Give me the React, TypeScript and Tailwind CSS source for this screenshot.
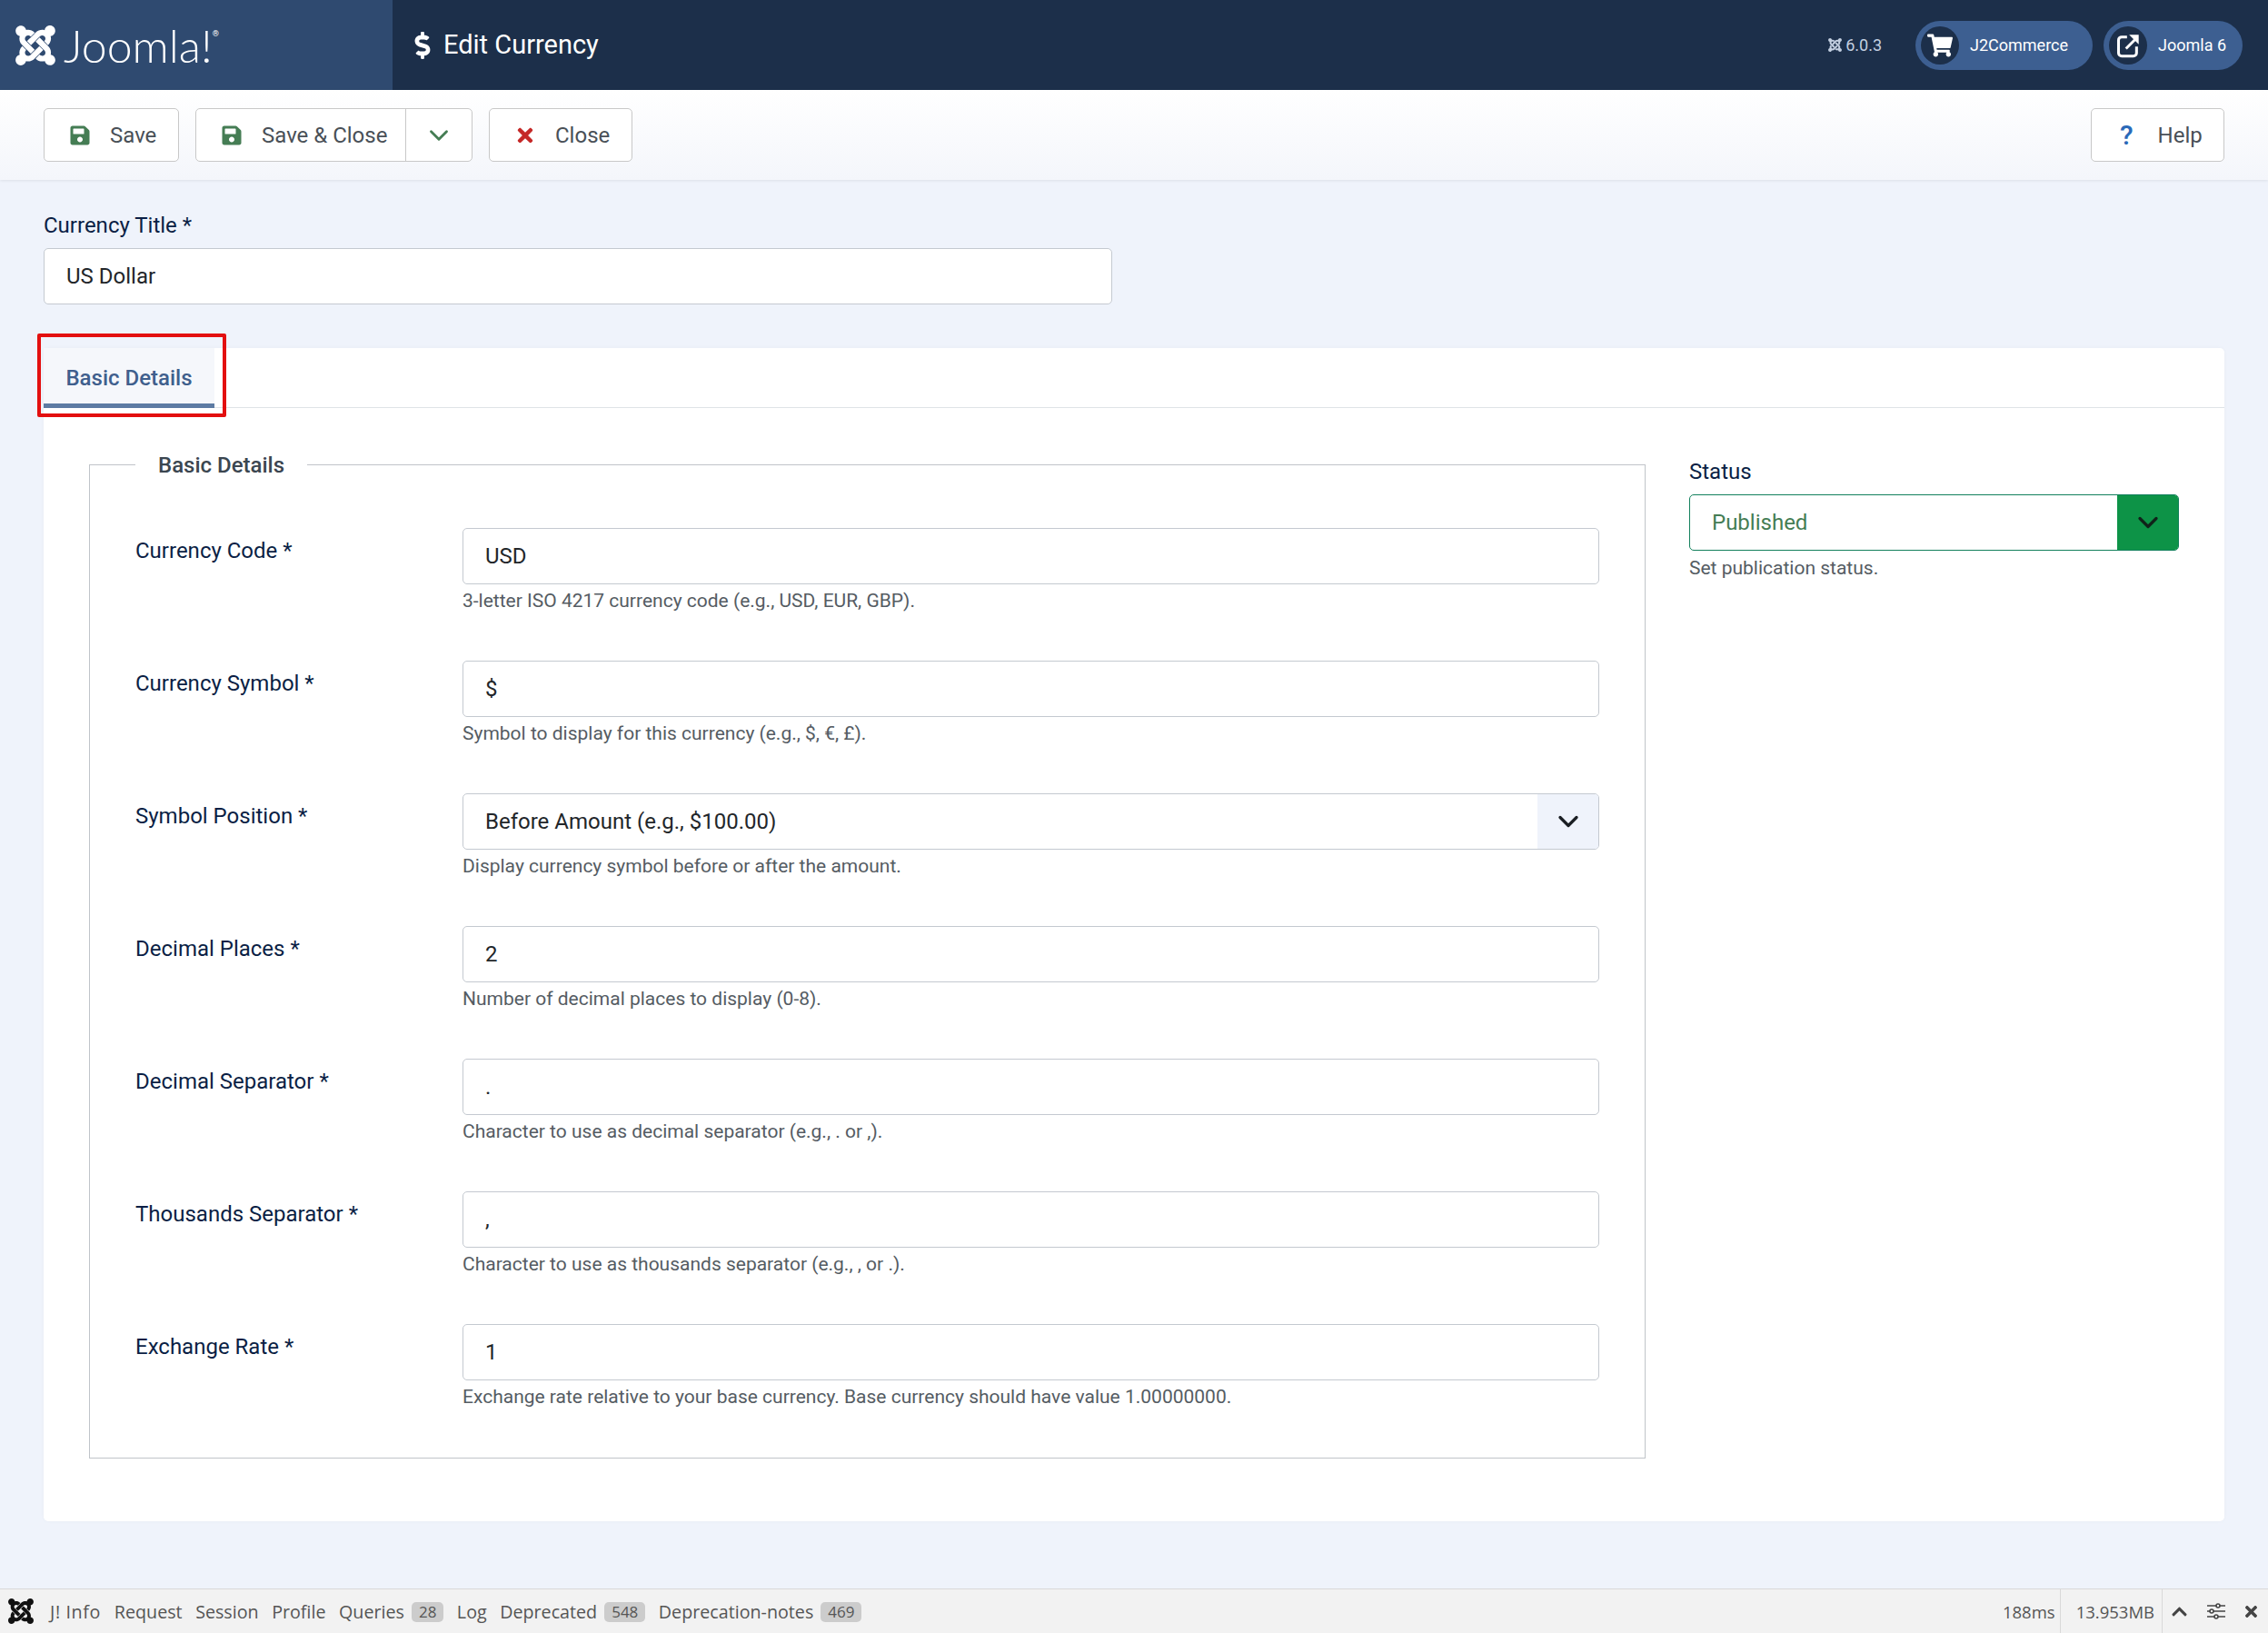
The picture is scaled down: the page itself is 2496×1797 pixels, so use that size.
import { ChevronDown } from 'lucide-react';
import {
  FaChevronUp,
  FaDollarSign,
  FaJoomla,
  FaSave,
  FaShoppingCart,
  FaTimes,
} from 'react-icons/fa';

const rows = [
  { label: 'Currency Code *', value: 'USD', help: '3-letter ISO 4217 currency code (e.g., USD, EUR, GBP).' },
  { label: 'Currency Symbol *', value: '$', help: 'Symbol to display for this currency (e.g., $, €, £).' },
  { label: 'Symbol Position *', value: 'Before Amount (e.g., $100.00)', help: 'Display currency symbol before or after the amount.', select: true },
  { label: 'Decimal Places *', value: '2', help: 'Number of decimal places to display (0-8).' },
  { label: 'Decimal Separator *', value: '.', help: 'Character to use as decimal separator (e.g., . or ,).' },
  { label: 'Thousands Separator *', value: ',', help: 'Character to use as thousands separator (e.g., , or .).' },
  { label: 'Exchange Rate *', value: '1', help: 'Exchange rate relative to your base currency. Base currency should have value 1.00000000.' },
];

const debugItems = [
  { label: 'Request' },
  { label: 'Session' },
  { label: 'Profile' },
  { label: 'Queries', count: '28' },
  { label: 'Log' },
  { label: 'Deprecated', count: '548' },
  { label: 'Deprecation-notes', count: '469' },
];

export default function App() {
  return (
    <div className="flex h-[1797px] flex-col overflow-hidden bg-[#eff3fb] font-['Roboto',sans-serif] text-[24px] text-[#22262a]">
      <header className="flex h-[99px] shrink-0 items-center bg-[#1c2f4a] text-white">
        <div className="flex h-full w-[432px] items-center bg-[#2f4a70] pl-[14px]">
          <FaJoomla className="text-[50px]" />
          <span className="ml-[6px] font-['Lato',sans-serif] text-[50px] font-light leading-none">Joomla!</span>
          <span className="mb-[24px] text-[9px]">®</span>
        </div>
        <div className="ml-[18px] flex items-center gap-[8px] text-[29px]">
          <FaDollarSign className="text-[30px]" />
          <span>Edit Currency</span>
        </div>
        <div className="ml-auto flex items-center pr-[28px]">
          <FaJoomla className="text-[17px] text-[#c3cfe0]" />
          <span className="ml-[3px] mr-[37px] text-[18px] text-[#c3cfe0]">6.0.3</span>
          <Pill label="J2Commerce" width="w-[195px]" icon={<FaShoppingCart className="text-[28px]" />} />
          <Pill label="Joomla 6" width="ml-[12px] w-[153px]" icon={<ExternalIcon />} />
        </div>
      </header>

      <div className="flex h-[99px] shrink-0 items-start bg-gradient-to-b from-white to-[#f4f6fb] px-[48px] pt-[20px] text-[#495057] shadow-[0_1px_3px_rgba(0,0,0,0.08)]">
        <ToolbarButton label="Save" icon={<FaSave className="text-[24px] text-[#457d54]" />} className="w-[149px]" />
        <div className="ml-[18px] flex h-[59px] w-[305px] items-center rounded-[5px] border border-[#c8c8c8] bg-white">
          <div className="flex flex-1 items-center pl-[27px]">
            <FaSave className="text-[24px] text-[#457d54]" />
            <span className="ml-[21px]">Save &amp; Close</span>
          </div>
          <div className="flex h-full w-[73px] items-center justify-center border-l border-[#c8c8c8]">
            <ChevronDown className="h-[34px] w-[34px] text-[#457d54]" strokeWidth={2} />
          </div>
        </div>
        <ToolbarButton label="Close" icon={<FaTimes className="text-[24px] text-[#c52827]" />} className="ml-[18px] w-[158px]" />
        <div className="ml-auto flex h-[59px] w-[147px] items-center gap-[27px] rounded-[5px] border border-[#c8c8c8] bg-white pl-[31px]">
          <span className="text-[30px] font-medium leading-none text-[#2a69b8]">?</span>
          <span>Help</span>
        </div>
      </div>

      <main className="flex-1 px-[48px] pt-[35px]">
        <label className="block leading-[30px] text-[#0b1f45]">Currency Title *</label>
        <div className="mt-[10px] flex h-[62px] w-[1176px] items-center rounded-[5px] border border-[#c4c9d0] bg-white pl-[24px]">US Dollar</div>

        <section className="mt-[48px] rounded-[5px] bg-white pb-[69px] shadow-[0_0_4px_rgba(0,0,0,0.03)]">
          <div className="flex h-[66px] border-b border-[#dfe3e7]">
            <div className="relative flex h-[66px] w-[188px] items-center justify-center border-b-[5px] border-[#5d7ba3] bg-[#f5f7fb] pt-[5px] font-medium text-[#3f5f8d]">
              Basic Details
              <span className="absolute bottom-[-15px] left-[-7px] right-[-13px] top-[-16px] rounded-[2px] border-[4px] border-[#e30f0f]" />
            </div>
          </div>

          <div className="flex gap-[48px] px-[50px]">
            <fieldset className="mt-[44px] h-[1112px] w-[1713px] shrink-0 border border-[#c0c4c9] pl-[50px] pr-[50px]">
              <legend className="px-[25px] pt-[2px] font-medium leading-[34px] text-[#3b4650]">Basic Details</legend>
              <div className="mt-[52px]">
                {rows.map((row) => (
                  <FormRow key={row.label} {...row} />
                ))}
              </div>
            </fieldset>

            <div className="w-[539px] pt-[55px]">
              <label className="block leading-[30px] text-[#0b1f45]">Status</label>
              <div className="mt-[10px] flex h-[62px] overflow-hidden rounded-[5px] border border-[#12805c] bg-white">
                <div className="flex flex-1 items-center pl-[24px] text-[#457d54]">Published</div>
                <div className="flex w-[67px] items-center justify-center bg-[#0d9347]">
                  <ChevronDown className="h-[36px] w-[36px] text-[#10231a]" strokeWidth={2.2} />
                </div>
              </div>
              <p className="mt-[5px] text-[21px] leading-[28px] text-[#555c63]">Set publication status.</p>
            </div>
          </div>
        </section>
      </main>

      <footer className="flex h-[49px] shrink-0 items-center border-t border-[#d9d9d9] bg-[#f2f2f2] font-['Open_Sans',sans-serif] text-[19.7px] text-[#555]">
        <FaJoomla className="ml-[7px] text-[32px] text-[#111]" />
        <span className="ml-[16px] mr-[15px] pt-[2px] tracking-[0.6px]">J! Info</span>
        {debugItems.map((item) => (
          <span key={item.label} className="mr-[14.5px] flex items-center pt-[2px]">
            {item.label}
            {item.count && (
              <span className="ml-[8px] rounded-[5px] bg-[#cccccc] px-[8px] text-[17px] leading-[22px] text-[#555]">{item.count}</span>
            )}
          </span>
        ))}
        <span className="ml-auto flex h-full items-center border-r border-[#d9d9d9] pr-[5px] pt-[2px] text-[18.5px]">188ms</span>
        <span className="flex h-full items-center border-r border-[#d9d9d9] pl-[17px] pr-[8px] pt-[2px] text-[18.5px]">13.953MB</span>
        <span className="flex items-center">
          <FaChevronUp className="ml-[9px] text-[19px] text-[#444]" />
          <SlidersIcon />
          <FaTimes className="ml-[19px] mr-[9px] text-[19px] text-[#444]" />
        </span>
      </footer>
    </div>
  );
}

function ExternalIcon() {
  return (
    <svg viewBox="0 0 24 24" className="h-[28px] w-[28px]" fill="none" stroke="currentColor" strokeWidth={2.6}>
      <path d="M11 4H6a3 3 0 0 0-3 3v12a3 3 0 0 0 3 3h11a3 3 0 0 0 3-3v-6" />
      <path d="M10 15 19 6" />
      <path d="M13 2h9v9z" fill="currentColor" stroke="none" />
    </svg>
  );
}

function SlidersIcon() {
  return (
    <svg viewBox="0 0 20 20" className="ml-[21px] h-[20px] w-[20px] text-[#444]" fill="none" stroke="currentColor" strokeWidth={1.6}>
      <path d="M0 4h10M14 4h6M0 10h3M7 10h13M0 16h8M12 16h8" />
      <circle cx="12" cy="4" r="2" />
      <circle cx="5" cy="10" r="2" />
      <circle cx="10" cy="16" r="2" />
    </svg>
  );
}

type PillProps = { label: string; width: string; icon: React.ReactNode };

function Pill({ label, width, icon }: PillProps) {
  return (
    <div className={`flex h-[54px] items-center rounded-full bg-[#3d5f91] pl-[6px] text-[18px] ${width}`}>
      <span className="flex h-[42px] w-[42px] items-center justify-center rounded-full bg-[#1c2f4a]">{icon}</span>
      <span className="ml-[12px]">{label}</span>
    </div>
  );
}

type ToolbarButtonProps = { label: string; icon: React.ReactNode; className: string };

function ToolbarButton({ label, icon, className }: ToolbarButtonProps) {
  return (
    <div className={`flex h-[59px] items-center gap-[21px] rounded-[5px] border border-[#c8c8c8] bg-white pl-[27px] ${className}`}>
      {icon}
      <span>{label}</span>
    </div>
  );
}

type FormRowProps = { label: string; value: string; help: string; select?: boolean };

function FormRow({ label, value, help, select }: FormRowProps) {
  return (
    <div className="flex h-[146px]">
      <label className="w-[360px] shrink-0 pt-[10px] leading-[30px] text-[#0b1f45]">{label}</label>
      <div className="flex-1">
        <div className="flex h-[62px] items-center overflow-hidden rounded-[5px] border border-[#c4c9d0] bg-white pl-[24px]">
          <span className="flex-1">{value}</span>
          {select && (
            <span className="flex h-full w-[67px] items-center justify-center bg-[#eff3fb]">
              <ChevronDown className="h-[36px] w-[36px] text-[#1b1f24]" strokeWidth={2.2} />
            </span>
          )}
        </div>
        <p className="mt-[4px] text-[21px] leading-[28px] text-[#555c63]">{help}</p>
      </div>
    </div>
  );
}
